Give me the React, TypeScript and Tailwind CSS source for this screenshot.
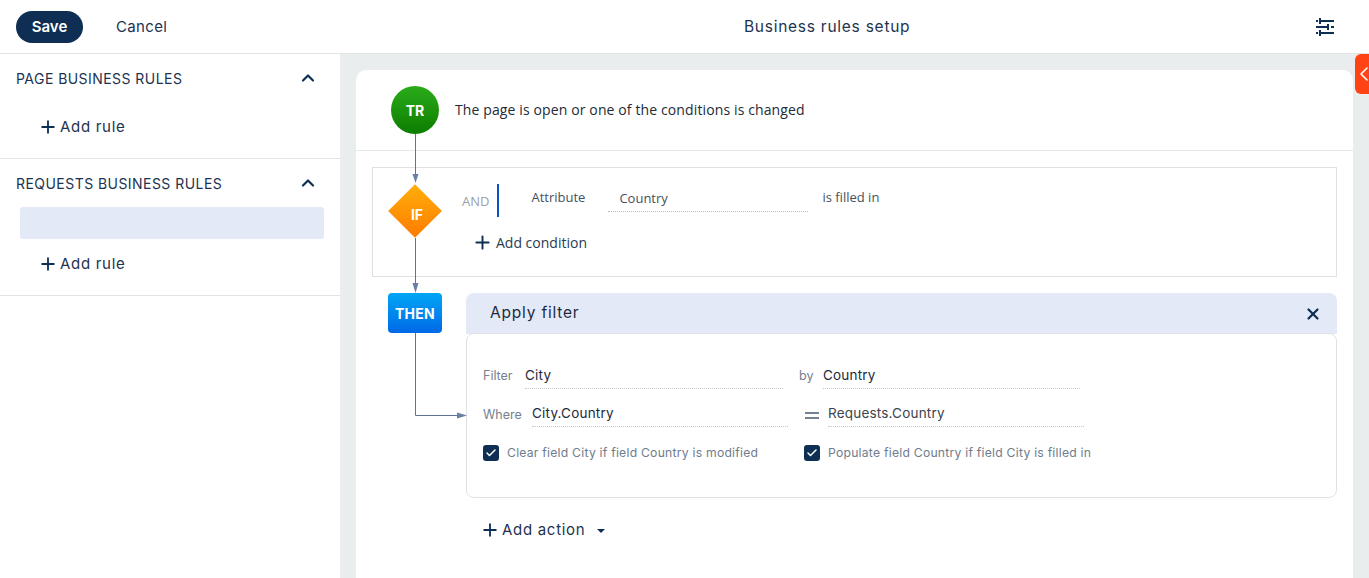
import { ChevronUp, Plus, X, Check, ChevronLeft } from 'lucide-react';

const mont = "font-['Inter','Liberation_Sans',sans-serif]";
const open = "font-['Open_Sans','Liberation_Sans',sans-serif]";

function AddRule() {
  return (
    <button className="flex items-center h-6 ml-[38px] text-[15px] text-[#1d3350] tracking-[0.7px]">
      <Plus className="w-5 h-5 text-[#0e2f53] mr-[2px]" strokeWidth={2.2} />
      Add rule
    </button>
  );
}

function SectionTitle({ title }: { title: string }) {
  return (
    <div className="flex items-center justify-between h-6 pl-4 pr-[22px]">
      <span className="text-[14px] text-[#1d3350] tracking-[0.45px]">{title}</span>
      <ChevronUp className="w-5 h-5 text-[#0e2f53]" strokeWidth={2.6} />
    </div>
  );
}

function Field({ className, children, text = 'text-[#1d2b3d]' }: { className: string; children: string; text?: string }) {
  return (
    <div className={`h-[25px] border-b border-dotted border-[#c4c8cc] text-[13.5px] tracking-[0.2px] leading-[22px] ${text} ${className}`}>
      {children}
    </div>
  );
}

function CheckItem({ label }: { label: string }) {
  return (
    <div className="flex items-center">
      <span className="flex items-center justify-center w-4 h-4 rounded-[3px] bg-[#0e2f53] mr-2">
        <Check className="w-3 h-3 text-white" strokeWidth={3} />
      </span>
      <span className="text-[12.2px] text-[#6f7c8c] tracking-[0.23px] whitespace-nowrap">{label}</span>
    </div>
  );
}

function Connectors() {
  return (
    <svg className="absolute left-0 top-0 pointer-events-none" width="520" height="430" fill="none">
      <g stroke="#5f7397" strokeWidth="1">
        <path d="M59.500 64V106" />
        <path d="M59.500 168V214" />
        <path d="M59.500 263V345.500H104" />
      </g>
      <g fill="#6a7fa3">
        <path d="M56.500 104h6l-3 9z" />
        <path d="M56.500 213h6l-3 10z" />
        <path d="M101 342.500v6l10-3z" />
      </g>
    </svg>
  );
}

export default function App() {
  return (
    <div className={`w-[1369px] h-[578px] overflow-hidden bg-white flex flex-col ${mont}`}>
      {/* Header */}
      <header className="relative flex items-center h-[54px] shrink-0 border-b border-[#e2e4e4] pl-4 pr-[35px]">
        <button className="w-[67px] h-8 pt-px rounded-full bg-[#0e2f53] text-white text-[15px] font-semibold">Save</button>
        <button className="ml-[33px] pt-[2px] text-[15px] text-[#1d3350] tracking-[0.35px]">Cancel</button>
        <div className="flex-1 text-center text-[15.5px] text-[#1d3350] tracking-[0.75px] pl-[171px]">Business rules setup</div>
        <svg width="18" height="18" viewBox="0 0 18 18" fill="#0e2f53">
          <rect x="5" y="2" width="13" height="2" />
          <rect x="0" y="2" width="2" height="2" />
          <rect x="3" y="0" width="2" height="6" />
          <rect x="0" y="8" width="11" height="2" />
          <rect x="15" y="8" width="3" height="2" />
          <rect x="11" y="6" width="2" height="6" />
          <rect x="5" y="14" width="13" height="2" />
          <rect x="0" y="14" width="2" height="2" />
          <rect x="3" y="12" width="2" height="6" />
        </svg>
      </header>

      <div className="flex flex-1 min-h-0">
        {/* Sidebar */}
        <aside className="w-[340px] shrink-0">
          <section className="h-[105px] border-b border-[#e2e4e4] pt-3">
            <SectionTitle title="PAGE BUSINESS RULES" />
            <div className="mt-[25px]">
              <AddRule />
            </div>
          </section>
          <section className="h-[137px] border-b border-[#e2e4e4] pt-3">
            <SectionTitle title="REQUESTS BUSINESS RULES" />
            <div className="h-8 ml-5 mr-4 mt-3 rounded-[3px] bg-[#e4e9f8]" />
            <div className="mt-[13px]">
              <AddRule />
            </div>
          </section>
        </aside>

        {/* Main */}
        <main className="relative flex-1 bg-[#e9eded] pl-4 pt-4 pr-4">
          <div className="relative h-[560px] rounded-tl-[10px] rounded-tr-[10px] bg-white">
            <div className="flex items-center h-[81px] pl-[35px] border-b border-[#e6e8e8]">
              <div className="w-12 h-12 rounded-full bg-gradient-to-b from-[#2aac1a] to-[#0c7c00] text-white text-[14px] font-bold flex items-center justify-center">
                TR
              </div>
              <span className={`ml-4 -mt-px text-[14px] tracking-[0.12px] text-[#222b36] ${open}`}>The page is open or one of the conditions is changed</span>
            </div>

            {/* IF block */}
            <div className="relative mt-4 mx-4 w-[965px] h-[110px] border border-[#e0e2e2]">
              <div className="absolute left-[23px] top-[24px] w-[38px] h-[38px] rotate-45 bg-gradient-to-br from-[#ffae0a] to-[#ff7a00]" />
              <div className="absolute left-[17px] top-[19px] w-[54px] h-[54px] flex items-center justify-center text-white text-[14px] font-bold">IF</div>
              <div className={`flex pl-[89px] pt-4 ${open}`}>
                <span className="text-[13px] text-[#9aa0a8] mt-[8px]">AND</span>
                <span className="w-[2px] h-[33px] bg-[#0a4fc4] ml-[8px]" />
                <span className="text-[13px] text-[#46505c] ml-8 mt-[4px]">Attribute</span>
                <div className="ml-[23px] w-[200px] h-[28px] border-b border-dotted border-[#b8bcc0] text-[13px] text-[#46505c] pl-[11px] pt-[5px]">Country</div>
                <span className="text-[13px] text-[#46505c] ml-[14px] mt-[4px]">is filled in</span>
              </div>
              <div className={`flex items-center mt-[15px] ml-[99px] text-[14px] text-[#2a3b52] ${open}`}>
                <Plus className="w-[21px] h-[21px] text-[#0e2f53] mr-[3px]" strokeWidth={2.2} />
                Add condition
              </div>
            </div>

            {/* THEN block */}
            <div className="flex items-start mt-4 pl-8">
              <div className="w-[54px] h-10 rounded-[4px] bg-gradient-to-b from-[#00a6f5] to-[#0068e6] text-white text-[14px] font-bold tracking-[0.3px] flex items-center justify-center">
                THEN
              </div>
              <div className="ml-6 w-[871px]">
                <div className="flex items-center justify-between h-[41px] rounded-t-lg bg-[#e4e9f8] pl-6 pr-[15px]">
                  <span className="-mt-[2px] text-[15.5px] text-[#1d2b3d] tracking-[0.8px]">Apply filter</span>
                  <X className="w-[18px] h-[18px] text-[#0e2f53]" strokeWidth={3} />
                </div>
                <div className="h-[165px] -mt-px rounded-lg border border-[#dfe1e3] bg-white pl-4 pt-[30px]">
                  <div className="flex items-start text-[12.5px] text-[#76818f]">
                    <span className="w-[42px] pt-[3px]">Filter</span>
                    <Field className="w-[258px]">City</Field>
                    <span className="w-[24px] ml-4 pt-[3px]">by</span>
                    <Field className="w-[257px]">Country</Field>
                  </div>
                  <div className="flex items-start mt-[13px] text-[12.5px] text-[#76818f]">
                    <span className="w-[49px] pt-[4px]">Where</span>
                    <Field className="w-[256px]">City.Country</Field>
                    <span className="flex flex-col gap-[3px] w-[14px] ml-[17px] mt-[10px] mr-[9px]">
                      <span className="h-[2px] bg-[#76818f]" />
                      <span className="h-[2px] bg-[#76818f]" />
                    </span>
                    <Field className="w-[256px]" text="text-[#3c4450]">Requests.Country</Field>
                  </div>
                  <div className="flex mt-[17px]">
                    <div className="w-[321px]">
                      <CheckItem label="Clear field City if field Country is modified" />
                    </div>
                    <CheckItem label="Populate field Country if field City is filled in" />
                  </div>
                </div>
                <div className="flex items-center mt-[21px] ml-[14px] text-[15px] text-[#1d3350] tracking-[0.7px]">
                  <Plus className="w-5 h-5 text-[#0e2f53] mr-[2px]" strokeWidth={2.2} />
                  Add action
                  <span className="ml-[12px] mt-[2px] w-0 h-0 border-x-[4.5px] border-x-transparent border-t-[4px] border-t-[#0e2f53]" />
                </div>
              </div>
            </div>

            <Connectors />
          </div>

          {/* Side tab */}
          <div className="absolute right-0 top-0 w-[14px] h-10 rounded-l-[6px] bg-[#ff4314] flex items-center justify-center">
            <ChevronLeft className="w-6 h-6 shrink-0 ml-[3px] text-white" strokeWidth={1.6} />
          </div>
        </main>
      </div>
    </div>
  );
}
